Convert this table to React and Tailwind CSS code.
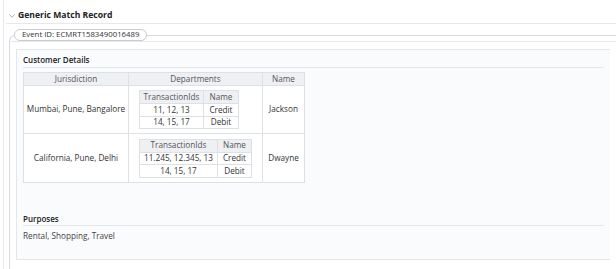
import React from "react";

const font = { fontFamily: '"Open Sans", "Noto Sans", sans-serif' };

function Nested({ rows, w1, w2 }) {
  return (
    <table className="ml-[10px] border-collapse table-fixed bg-white" style={{ width: w1 + w2 }}>
      <colgroup>
        <col style={{ width: w1 }} />
        <col style={{ width: w2 }} />
      </colgroup>
      <thead>
        <tr className="bg-[#eef0f3]">
          <th className="border border-[#dde0e4] h-[13px] p-0 font-normal text-[#555]">TransactionIds</th>
          <th className="border border-[#dde0e4] h-[13px] p-0 font-normal text-[#555]">Name</th>
        </tr>
      </thead>
      <tbody>
        {rows.map((r, i) => (
          <tr key={i}>
            <td className="border border-[#dde0e4] h-[12.5px] p-0 text-center">{r[0]}</td>
            <td className="border border-[#dde0e4] h-[12.5px] p-0 text-center">{r[1]}</td>
          </tr>
        ))}
      </tbody>
    </table>
  );
}

export default function App() {
  return (
    <div className="w-[616px] h-[269px] bg-white overflow-hidden text-[#333] leading-none text-[8px]" style={font}>
      <div className="ml-[3px] h-full border-l border-[#e4e7eb] pl-[2px] flex flex-col">
        <div className="h-[24px] border-b border-[#e6e8eb] flex items-end pb-[3px] pl-[3px] gap-[3px]">
          <svg width="6" height="4" viewBox="0 0 6 4" className="mb-[2px]">
            <path d="M0.5 0.5 L3 3.3 L5.5 0.5" fill="none" stroke="#9aa0a6" strokeWidth="0.8" />
          </svg>
          <span className="text-[8.6px] font-bold text-[#222]">Generic Match Record</span>
        </div>
        <fieldset className="mt-[5px] ml-[3px] border-l border-t border-[#d6d9dd] rounded-tl-[6px] px-[6px] flex-1 min-w-0">
          <legend className="-ml-[2px] px-[7px] h-[12px] border border-[#c9ccd0] rounded-full bg-white flex items-center text-[7.8px] text-[#333]">
            Event ID: ECMRT1583490016489
          </legend>
          <div className="border-t border-[#e6e8eb] -mx-[6px] mb-[7px]" />
          <div className="bg-[#fafbfd] border border-[#e3e6ea] border-r-0 h-[211px] px-[6px] pt-[6px] flex flex-col items-start">
            <div className="self-stretch border-b border-[#e3e6ea] pb-[3px] font-semibold text-[8px] text-[#222]">Customer Details</div>
            <table className="mt-[4px] w-[281px] border-collapse table-fixed bg-white text-[8.2px]">
              <colgroup>
                <col style={{ width: 105 }} />
                <col style={{ width: 134 }} />
                <col style={{ width: 42 }} />
              </colgroup>
              <thead>
                <tr className="bg-[#eef0f3]">
                  <th className="border border-[#dde0e4] h-[13px] p-0 font-normal text-[#555]">Jurisdiction</th>
                  <th className="border border-[#dde0e4] h-[13px] p-0 font-normal text-[#555]">Departments</th>
                  <th className="border border-[#dde0e4] h-[13px] p-0 font-normal text-[#555]">Name</th>
                </tr>
              </thead>
              <tbody>
                <tr>
                  <td className="border border-[#dde0e4] h-[48px] p-0 text-center">Mumbai, Pune, Bangalore</td>
                  <td className="border border-[#dde0e4] p-0">
                    <Nested w1={64} w2={35} rows={[["11, 12, 13", "Credit"], ["14, 15, 17", "Debit"]]} />
                  </td>
                  <td className="border border-[#dde0e4] p-0 text-center">Jackson</td>
                </tr>
                <tr>
                  <td className="border border-[#dde0e4] h-[49px] p-0 text-center">California, Pune, Delhi</td>
                  <td className="border border-[#dde0e4] p-0">
                    <Nested w1={78} w2={34} rows={[["11.245, 12.345, 13", "Credit"], ["14, 15, 17", "Debit"]]} />
                  </td>
                  <td className="border border-[#dde0e4] p-0 text-center">Dwayne</td>
                </tr>
              </tbody>
            </table>
            <div className="self-stretch mt-[32px] border-b border-[#e3e6ea] pb-[2px] font-semibold text-[8px] text-[#222]">Purposes</div>
            <div className="mt-[6px] text-[8.2px] text-[#444]">Rental, Shopping, Travel</div>
          </div>
        </fieldset>
      </div>
    </div>
  );
}
